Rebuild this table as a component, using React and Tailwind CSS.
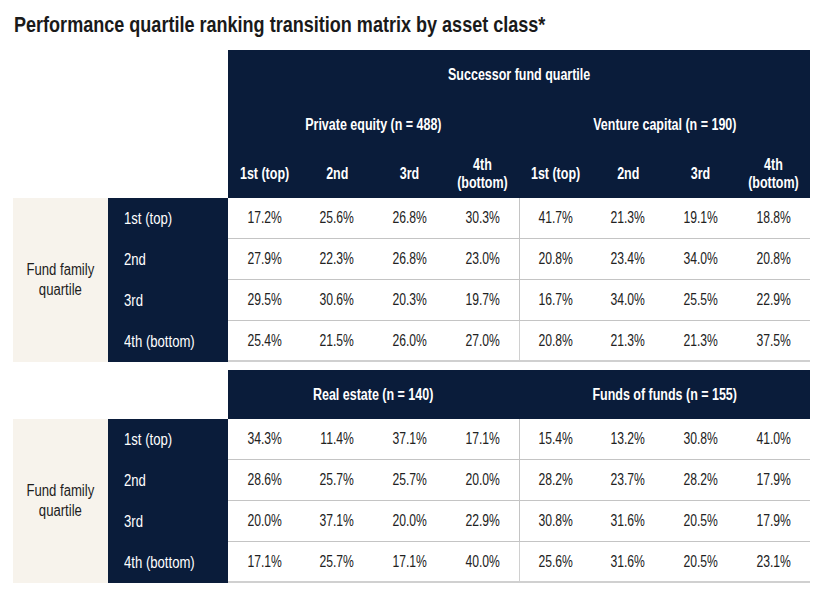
import React from "react";

const cols = ["1st (top)", "2nd", "3rd", "4th\n(bottom)", "1st (top)", "2nd", "3rd", "4th\n(bottom)"];
const rowLabels = ["1st (top)", "2nd", "3rd", "4th (bottom)"];

const top = [
  ["17.2%", "25.6%", "26.8%", "30.3%", "41.7%", "21.3%", "19.1%", "18.8%"],
  ["27.9%", "22.3%", "26.8%", "23.0%", "20.8%", "23.4%", "34.0%", "20.8%"],
  ["29.5%", "30.6%", "20.3%", "19.7%", "16.7%", "34.0%", "25.5%", "22.9%"],
  ["25.4%", "21.5%", "26.0%", "27.0%", "20.8%", "21.3%", "21.3%", "37.5%"],
];

const bottom = [
  ["34.3%", "11.4%", "37.1%", "17.1%", "15.4%", "13.2%", "30.8%", "41.0%"],
  ["28.6%", "25.7%", "25.7%", "20.0%", "28.2%", "23.7%", "28.2%", "17.9%"],
  ["20.0%", "37.1%", "20.0%", "22.9%", "30.8%", "31.6%", "20.5%", "17.9%"],
  ["17.1%", "25.7%", "17.1%", "40.0%", "25.6%", "31.6%", "20.5%", "23.1%"],
];

// narrow face isn't installed, so squeeze Arial-width text horizontally
const Head = ({ children, className = "" }) => (
  <div className={"bg-[#0a1c3a] text-white font-bold text-[16px] flex items-center justify-center " + className}>
    <span className="inline-block scale-x-[0.78] whitespace-pre-line text-center leading-[18px]">{children}</span>
  </div>
);

const Body = ({ rows }) => (
  <>
    <div className="row-span-4 bg-[#f7f3ec] flex items-center justify-center text-[16px] leading-[20px] text-[#1c1c1c]">
      <span className="inline-block scale-x-[0.82] text-center">
        Fund family
        <br />
        quartile
      </span>
    </div>
    {rows.map((r, i) => (
      <React.Fragment key={i}>
        <div className="bg-[#0a1c3a] text-white text-[16px] flex items-center pl-[16px] h-[41px]">
          <span className="inline-block scale-x-[0.82] origin-left whitespace-nowrap">{rowLabels[i]}</span>
        </div>
        {r.map((v, j) => (
          <div
            key={j}
            className={
              "flex items-center justify-center text-[16px] text-[#222] h-[41px] " +
              (i === 3 ? "border-b-2 border-[#d0d0d0] " : "border-b border-[#c4c4c4] ") +
              (j === 4 ? "border-l border-[#b8b8b8]" : "")
            }
          >
            <span className="inline-block scale-x-[0.76]">{v}</span>
          </div>
        ))}
      </React.Fragment>
    ))}
  </>
);

export default function App() {
  return (
    <div
      className="w-[833px] h-[595px] bg-white overflow-hidden"
      style={{ fontFamily: '"Liberation Sans", Arial, sans-serif' }}
    >
      <div className="pl-[14px] pt-[12px] h-[50px] text-[22px] font-bold text-[#1a1a1a] leading-[26px]">
        <h1 className="inline-block scale-x-[0.82] origin-left whitespace-nowrap">
          Performance quartile ranking transition matrix by asset class*
        </h1>
      </div>

      <div className="ml-[13px] w-[797px] grid grid-cols-[95px_120px_repeat(8,1fr)]">
        <div className="col-span-2" />
        <Head className="col-span-8 h-[50px]">Successor fund quartile</Head>
        <div className="col-span-2" />
        <Head className="col-span-4 h-[50px]">Private equity (n = 488)</Head>
        <Head className="col-span-4 h-[50px]">Venture capital (n = 190)</Head>
        <div className="col-span-2" />
        {cols.map((c, i) => (
          <Head key={i} className="h-[48px]">{c}</Head>
        ))}
        <Body rows={top} />
      </div>

      <div className="ml-[13px] mt-[8px] w-[797px] grid grid-cols-[95px_120px_repeat(8,1fr)]">
        <div className="col-span-2" />
        <Head className="col-span-4 h-[49px]">Real estate (n = 140)</Head>
        <Head className="col-span-4 h-[49px]">Funds of funds (n = 155)</Head>
        <Body rows={bottom} />
      </div>
    </div>
  );
}
